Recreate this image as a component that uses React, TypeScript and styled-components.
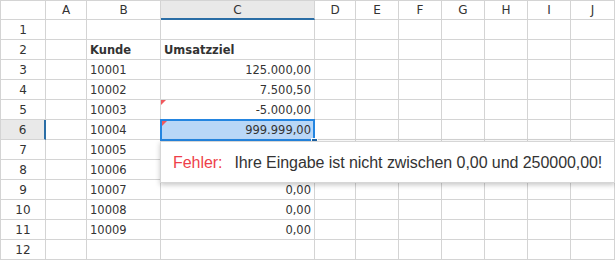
import React from "react";
import styled, { createGlobalStyle, css } from "styled-components";

const Global = createGlobalStyle`
  html, body { margin: 0; padding: 0; background: #fff; }
  body { font-family: "DejaVu Sans", Verdana, sans-serif; }
  * { box-sizing: border-box; }
`;

const COLS = ["A", "B", "C", "D", "E", "F", "G", "H", "I", "J"];
const WIDTHS = [45, 41, 74, 154, 41, 43, 43, 43, 43, 43, 44];

const Sheet = styled.div`
  position: relative;
  width: 615px;
  height: 260px;
  display: grid;
  grid-template-columns: ${WIDTHS.map((w) => w + "px").join(" ")};
  grid-template-rows: 19px repeat(12, 20px);
  border-top: 1px solid #d4d4d4;
  border-left: 1px solid #d4d4d4;
  overflow: hidden;
  color: #333;
  font-size: 11.5px;
`;

const Corner = styled.div`
  border-right: 1px solid #d4d4d4;
  border-bottom: 1px solid #d4d4d4;
  background: #fff;
`;

const ColHeader = styled.div<{ $active?: boolean }>`
  display: flex;
  align-items: center;
  justify-content: center;
  border-right: 1px solid #d4d4d4;
  border-bottom: 1px solid #d4d4d4;
  background: #fff;
  font-size: 12px;
  color: #333;
  ${(p) =>
    p.$active &&
    css`
      background: #e9e9e9;
      border-bottom: 2px solid #2b6ea6;
    `}
`;

const RowHeader = styled.div<{ $active?: boolean }>`
  display: flex;
  align-items: center;
  justify-content: center;
  border-right: 1px solid #d4d4d4;
  border-bottom: 1px solid #d4d4d4;
  background: #fff;
  font-size: 12px;
  color: #333;
  padding-top: 1px;
  ${(p) =>
    p.$active &&
    css`
      background: #e9e9e9;
      border-right: 2px solid #2b6ea6;
    `}
`;

const Cell = styled.div<{ $align?: "left" | "right"; $bold?: boolean; $selected?: boolean; $flag?: boolean }>`
  position: relative;
  display: flex;
  align-items: center;
  justify-content: ${(p) => (p.$align === "right" ? "flex-end" : "flex-start")};
  padding: 1px 3px 0 3px;
  border-right: 1px solid #d4d4d4;
  border-bottom: 1px solid #d4d4d4;
  white-space: nowrap;
  font-weight: ${(p) => (p.$bold ? 700 : 400)};
  background: ${(p) => (p.$selected ? "#b9d7f7" : "#fff")};
  ${(p) =>
    p.$flag &&
    css`
      &::before {
        content: "";
        position: absolute;
        left: ${p.$selected ? "1px" : "0"};
        top: ${p.$selected ? "1px" : "0"};
        width: 0;
        height: 0;
        border-top: 5px solid #f0595e;
        border-right: 5px solid transparent;
        z-index: 2;
      }
    `}
`;

const HeadText = styled.span`
  position: relative;
  display: inline-block;
  &::after {
    content: "";
    position: absolute;
    left: -1px;
    right: -4px;
    bottom: -5px;
    height: 2px;
    background: linear-gradient(to right, #8a8a8a, #b5b5b5 70%, #e6e6e6);
  }
`;

const Selection = styled.div`
  position: absolute;
  left: 159px;
  top: 118px;
  width: 155px;
  height: 22px;
  border: 2px solid #2485e0;
  pointer-events: none;
  z-index: 1;
`;

const FillHandle = styled.div`
  position: absolute;
  left: 310px;
  top: 137px;
  width: 7px;
  height: 6px;
  background: #1f64a4;
  border: 1px solid #fff;
  z-index: 1;
`;

const Tooltip = styled.div`
  position: absolute;
  left: 159px;
  top: 140px;
  width: 455px;
  height: 42px;
  background: #fff;
  border: 1px solid #d6d6d6;
  box-shadow: 0 2px 5px rgba(0, 0, 0, 0.22);
  display: flex;
  align-items: center;
  padding: 1px 0 0 12px;
  font-family: "Liberation Sans", Arial, sans-serif;
  font-size: 16px;
  letter-spacing: -0.06px;
  color: #333;
  white-space: nowrap;
  z-index: 3;
`;

const ErrLabel = styled.span`
  color: #ee3f4a;
  margin-right: 12px;
`;

type Row = { b?: string; c?: string; head?: boolean; flag?: boolean; selected?: boolean };

const rows: Row[] = [
  {},
  { b: "Kunde", c: "Umsatzziel", head: true },
  { b: "10001", c: "125.000,00" },
  { b: "10002", c: "7.500,50" },
  { b: "10003", c: "-5.000,00", flag: true },
  { b: "10004", c: "999.999,00", flag: true, selected: true },
  { b: "10005", c: "0,00" },
  { b: "10006", c: "0,00" },
  { b: "10007", c: "0,00" },
  { b: "10008", c: "0,00" },
  { b: "10009", c: "0,00" },
  {},
];

export default function App() {
  return (
    <>
      <Global />
      <Sheet>
        <Corner />
        {COLS.map((c) => (
          <ColHeader key={c} $active={c === "C"}>
            {c}
          </ColHeader>
        ))}
        {rows.map((r, i) => (
          <React.Fragment key={i}>
            <RowHeader $active={r.selected}>{i + 1}</RowHeader>
            <Cell />
            <Cell $bold={r.head}>{r.head ? <HeadText>{r.b}</HeadText> : r.b}</Cell>
            <Cell $align={r.head ? "left" : "right"} $bold={r.head} $flag={r.flag} $selected={r.selected}>
              {r.head ? <HeadText>{r.c}</HeadText> : r.c}
            </Cell>
            {COLS.slice(3).map((c) => (
              <Cell key={c} />
            ))}
          </React.Fragment>
        ))}
        <Selection />
        <FillHandle />
        <Tooltip>
          <ErrLabel>Fehler:</ErrLabel>
          Ihre Eingabe ist nicht zwischen 0,00 und 250000,00!
        </Tooltip>
      </Sheet>
    </>
  );
}
